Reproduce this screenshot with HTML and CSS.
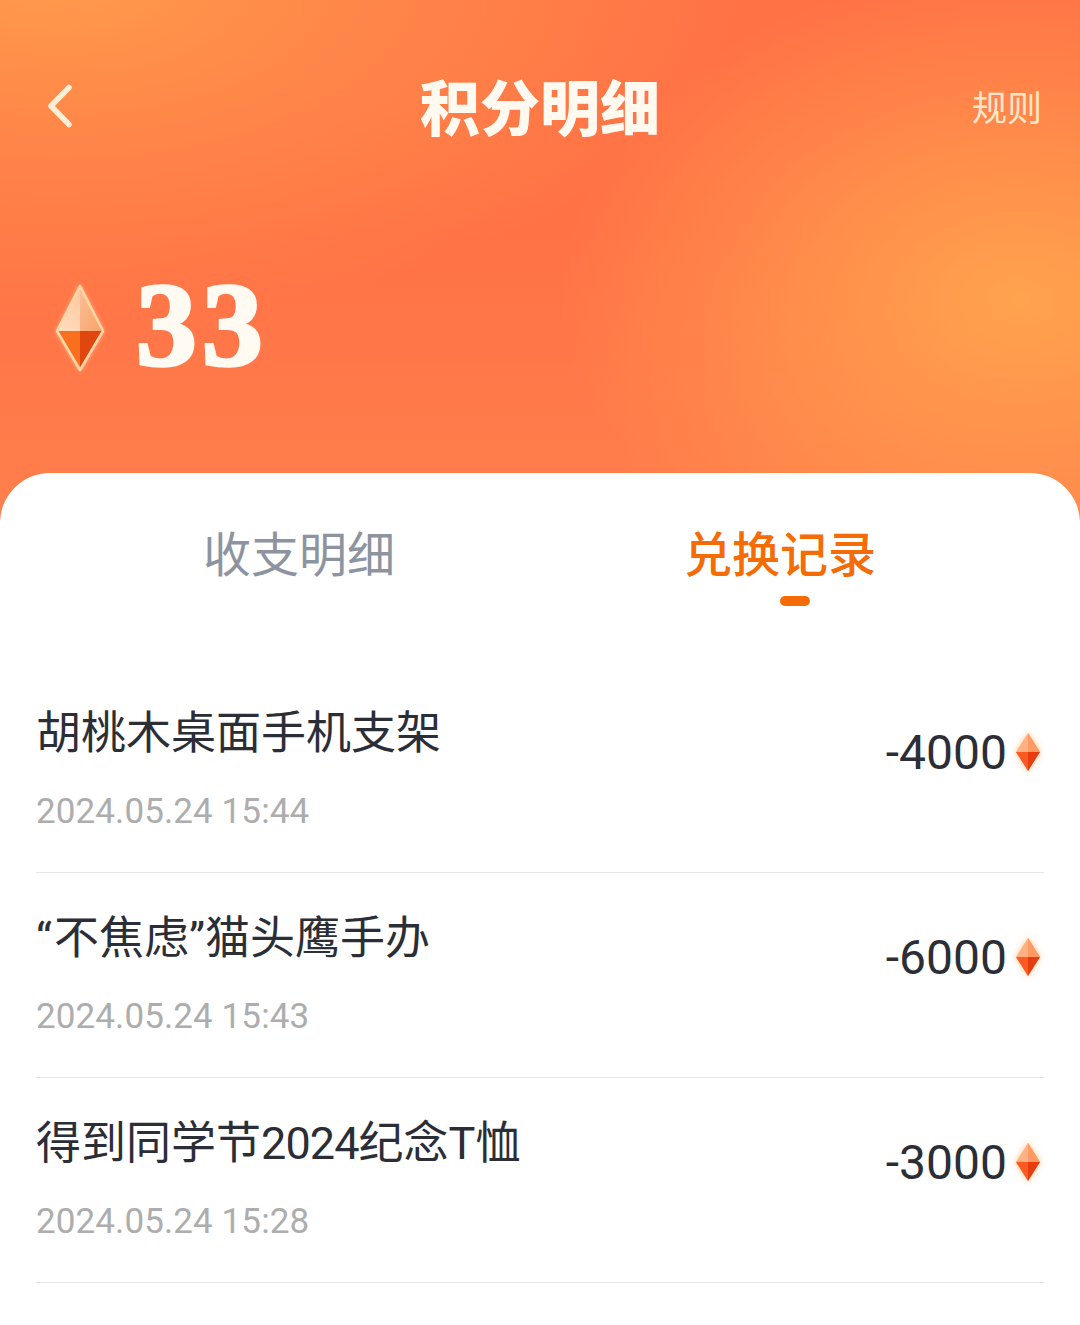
FILE: index.html
```html
<!DOCTYPE html>
<html lang="zh-CN">
<head>
    <meta charset="UTF-8">
    <meta name="viewport" content="width=device-width, initial-scale=1.0">
    <title>积分明细</title>
    <link rel="stylesheet" href="styles.css">
</head>
<body>
    <svg class="defs" width="0" height="0">
        <defs>
            <linearGradient id="gem-top-l" x1="0.7" y1="0" x2="0.2" y2="1">
                <stop offset="0" stop-color="#ffc9a0"/>
                <stop offset="1" stop-color="#ffdcbc"/>
            </linearGradient>
            <linearGradient id="gem-top-r" x1="0" y1="0" x2="1" y2="1">
                <stop offset="0" stop-color="#fcc098"/>
                <stop offset="1" stop-color="#f8a268"/>
            </linearGradient>
        </defs>
        <symbol id="gem" viewBox="0 0 50 88">
            <path d="M25 2 L48 47 H25 Z" fill="url(#gem-top-r)"/>
            <path d="M25 2 L2 47 H25 Z" fill="url(#gem-top-l)"/>
            <path d="M2 47 H25 V86 Z" fill="#f8701f"/>
            <path d="M48 47 H25 V86 Z" fill="#df470f"/>
            <path d="M25 2 L48 47 L25 86 L2 47 Z" fill="none" stroke="#ffd7a6" stroke-width="2.5" stroke-linejoin="round"/>
        </symbol>
        <symbol id="gem-small" viewBox="0 0 24 38">
            <path d="M12 0 L24 19 L12 38 L0 19 Z" fill="#ffb184"/>
            <path d="M12 0 L24 19 H12 Z" fill="#ff9a62"/>
            <path d="M0 19 H12 V38 Z" fill="#fb5a22"/>
            <path d="M24 19 H12 V38 Z" fill="#e53d10"/>
        </symbol>
    </svg>

    <header class="hero">
        <div class="nav">
            <svg class="back" width="28" height="44" viewBox="0 0 28 44">
                <path d="M24 3.5 L6 22 L24 40.5" fill="none" stroke="#ffeed6" stroke-width="5.5" stroke-linecap="round" stroke-linejoin="round"/>
            </svg>
            <h1>积分明细</h1>
            <a class="rule">规则</a>
        </div>
        <div class="balance">
            <svg class="gem-big"><use href="#gem"/></svg>
            <span class="points">33</span>
        </div>
    </header>

    <main class="sheet">
        <div class="tabs">
            <div class="tab">收支明细</div>
            <div class="tab active">兑换记录</div>
        </div>

        <ul class="records">
            <li class="record">
                <div class="info">
                    <div class="name">胡桃木桌面手机支架</div>
                    <div class="time">2024.05.24 15:44</div>
                </div>
                <div class="amount">-4000<svg class="gem-sm"><use href="#gem-small"/></svg></div>
            </li>
            <li class="record">
                <div class="info">
                    <div class="name"><span class="quote">“</span>不焦虑”猫头鹰手办</div>
                    <div class="time">2024.05.24 15:43</div>
                </div>
                <div class="amount">-6000<svg class="gem-sm"><use href="#gem-small"/></svg></div>
            </li>
            <li class="record">
                <div class="info">
                    <div class="name">得到同学节<span class="tight">2024</span>纪念T恤</div>
                    <div class="time">2024.05.24 15:28</div>
                </div>
                <div class="amount">-3000<svg class="gem-sm"><use href="#gem-small"/></svg></div>
            </li>
        </ul>
    </main>
</body>
</html>
```

FILE: styles.css
```css
* {
    box-sizing: border-box;
}

html, body {
    height: 100%;
}

body {
    margin: 0;
    background-color: #fff;
    font-family: Roboto, "Noto Sans CJK SC", sans-serif;
    overflow: hidden;
}

.defs {
    display: block;
}

.hero {
    height: 520px;
    padding: 0 36px;
    background:
        radial-gradient(ellipse 460px 330px at 1020px 300px, rgba(255, 166, 79, 0.95) 0%, rgba(255, 160, 78, 0.6) 45%, rgba(255, 150, 75, 0) 100%),
        radial-gradient(ellipse 680px 340px at 60px -20px, #ff9a4c 0%, rgba(255, 146, 74, 0.65) 45%, rgba(255, 120, 70, 0) 100%),
        linear-gradient(180deg, #ff7246 0%, #ff7246 45%, #ff7f4c 100%);
}

.nav {
    height: 216px;
    display: flex;
    align-items: center;
    justify-content: space-between;
    position: relative;
}

.back {
    margin-left: 9px;
    margin-top: -4px;
}

.nav h1 {
    position: absolute;
    left: 0;
    right: 0;
    top: 70px;
    margin: 0;
    text-align: center;
    font-size: 60px;
    line-height: 70px;
    font-weight: 900;
    color: #fff9ef;
    font-family: "Noto Sans CJK SC", sans-serif;
}

.rule {
    margin-top: -5px;
    margin-right: 2px;
    font-size: 35px;
    color: #ffe6c8;
}

.balance {
    display: flex;
    align-items: center;
    height: 218px;
}

.gem-big {
    width: 50px;
    height: 88px;
    margin-left: 19px;
    margin-right: 31px;
    margin-top: 5px;
    filter: drop-shadow(0 0 2px rgba(255, 220, 170, 0.6));
}

.points {
    display: inline-block;
    margin-top: 2px;
    font-family: "Liberation Serif", serif;
    font-weight: 700;
    font-size: 118px;
    line-height: 1;
    letter-spacing: 5px;
    color: #fffaf2;
    -webkit-text-stroke: 3.5px #fffaf2;
    transform: scaleX(1.03);
    transform-origin: left center;
}

.sheet {
    position: absolute;
    top: 473px;
    left: 0;
    right: 0;
    bottom: 0;
    padding: 0 36px;
    background-color: #fff;
    border-radius: 50px 50px 0 0;
}

.tabs {
    display: flex;
    margin: 0 -36px;
    height: 195px;
}

.tab {
    width: 600px;
    height: 140px;
    padding-top: 50px;
    padding-right: 2px;
    text-align: center;
    font-size: 48px;
    line-height: 66px;
    color: #8e949f;
}

.tab.active {
    width: 360px;
    padding-right: 0;
    position: relative;
    color: #f56b05;
    font-weight: 500;
}

.tab.active::after {
    content: "";
    position: absolute;
    left: 180px;
    top: 123px;
    width: 30px;
    height: 10px;
    border-radius: 5px;
    background-color: #f56b05;
}

.records {
    list-style: none;
    margin: 0;
    padding: 0;
}

.record {
    height: 205px;
    display: flex;
    align-items: center;
    justify-content: space-between;
    border-bottom: 1px solid #e6e6e8;
}

.info {
    margin-top: -4px;
}

.name {
    font-size: 45px;
    line-height: 60px;
    color: #2b2e36;
}

.quote {
    margin-right: 2px;
}

.tight {
    letter-spacing: -0.9px;
}

.time {
    margin-top: 28px;
    font-size: 35px;
    line-height: 40px;
    letter-spacing: 0.1px;
    color: #adadad;
}

.amount {
    display: flex;
    align-items: center;
    margin-top: -36px;
    font-size: 48px;
    color: #2b2e36;
}

.gem-sm {
    width: 24px;
    height: 38px;
    margin-left: 9px;
    margin-right: 4px;
    filter: drop-shadow(0 0 3px rgba(255, 190, 130, 0.9));
}
```
